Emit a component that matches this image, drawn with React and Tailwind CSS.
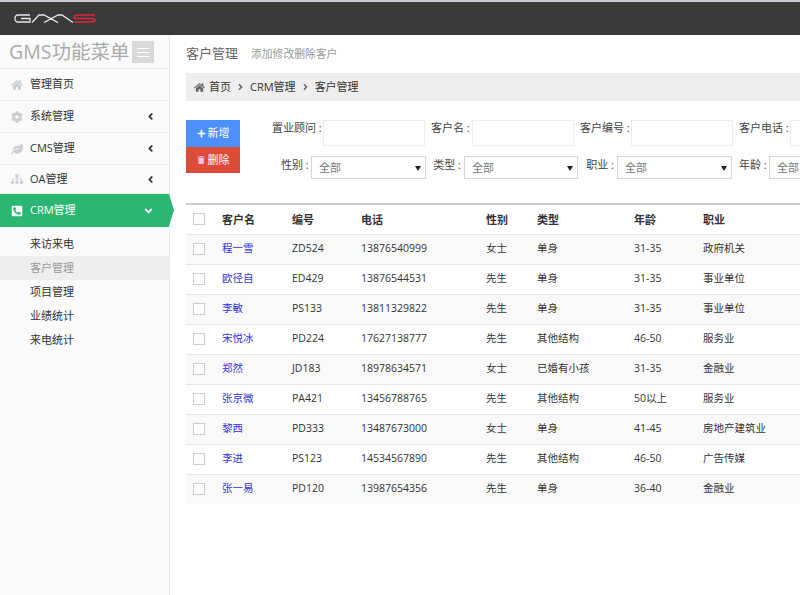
import React from "react";
import { FaHome, FaCog, FaLeaf, FaSitemap, FaPhoneSquareAlt, FaPlus, FaTrash, FaAngleLeft, FaAngleDown } from "react-icons/fa";

const menu = [
  { icon: FaCog, label: "系统管理", h: "h-[32px]" },
  { icon: FaLeaf, label: "CMS管理", h: "h-[32px]" },
  { icon: FaSitemap, label: "OA管理", h: "h-[29px]" },
];

const subMenu = ["来访来电", "客户管理", "项目管理", "业绩统计", "来电统计"];

const customers = [
  ["程一雪", "ZD524", "13876540999", "女士", "单身", "31-35", "政府机关"],
  ["欧径自", "ED429", "13876544531", "先生", "单身", "31-35", "事业单位"],
  ["李敏", "PS133", "13811329822", "先生", "单身", "31-35", "事业单位"],
  ["宋悦冰", "PD224", "17627138777", "先生", "其他结构", "46-50", "服务业"],
  ["郑然", "JD183", "18978634571", "女士", "已婚有小孩", "31-35", "金融业"],
  ["张京微", "PA421", "13456788765", "先生", "其他结构", "50以上", "服务业"],
  ["黎西", "PD333", "13487673000", "女士", "单身", "41-45", "房地产建筑业"],
  ["李进", "PS123", "14534567890", "先生", "其他结构", "46-50", "广告传媒"],
  ["张一易", "PD120", "13987654356", "先生", "单身", "36-40", "金融业"],
];

const Field = ({ label, labelClass, inputClass }) => (
  <div className="flex shrink-0 items-start">
    <span className={`whitespace-nowrap pr-[3px] text-right text-[11px] leading-[16px] text-[#444] ${labelClass}`}>{label} :</span>
    <input className={`h-[26px] border border-[#eee] bg-white ${inputClass}`} />
  </div>
);

const Pick = ({ label, labelClass, selectClass }) => (
  <div className="flex shrink-0 items-start">
    <span className={`whitespace-nowrap pr-[3px] pt-[1px] text-right text-[11px] leading-[16px] text-[#444] ${labelClass}`}>{label} :</span>
    <div className={`relative flex h-[23px] items-center border border-[#d5d5d5] bg-white pl-[7px] pt-[1px] text-[11px] text-[#777] ${selectClass}`}>
      全部
      <span className="absolute right-[4px] top-[9px] h-0 w-0 border-x-[3px] border-t-[5px] border-x-transparent border-t-[#222]" />
    </div>
  </div>
);

export default function App() {
  return (
    <div className="flex h-[595px] w-[800px] flex-col overflow-hidden bg-white font-['Open_Sans','Noto_Sans_CJK_SC',sans-serif] text-[11px] text-[#333]">
      {/* Header */}
      <div className="flex h-[35px] shrink-0 items-center border-t-2 border-[#c8c8d0] bg-[#3a3a3a] pl-[14px]">
        <svg width="82" height="9" viewBox="0 0 82 9" fill="none" strokeWidth="1.3">
          <path d="M16 1H4Q1 1 1 4.500Q1 8 4 8H16V4.500H7" stroke="#e8e8e8" />
          <path d="M18 8.500L25 1H30L44 8.500M30 8.500L44 1H48L59 8.500" stroke="#e8e8e8" />
          <path d="M81 1H64Q60 1 60 3Q60 4.500 64 4.500H77Q81 4.500 81 6.500Q81 8 77 8H60" stroke="#e0243a" strokeWidth="1.6" />
        </svg>
      </div>

      <div className="flex min-h-0 flex-1">
        {/* Sidebar */}
        <div className="relative w-[170px] shrink-0 border-r border-[#e8e8e8] bg-[#fafafa]">
          <div className="flex h-[34px] items-center border-b border-[#e5e5e5] pl-[9px]">
            <span className="text-[19.5px] leading-[34px] text-[#aaa]">GMS功能菜单</span>
            <span className="ml-[3px] mt-[1px] flex h-[22px] w-[22px] flex-col items-center justify-center gap-[3px] bg-[#d9d9d9]">
              <i className="h-px w-[12px] bg-white" />
              <i className="h-px w-[12px] bg-white" />
              <i className="h-px w-[12px] bg-white" />
            </span>
          </div>
          <div className="flex h-[32px] items-center border-b border-[#eee] pl-[11px]">
            <FaHome className="h-[12px] w-[12px] text-[#ccc]" />
            <span className="ml-[7px]">管理首页</span>
          </div>
          {menu.map((m) => (
            <div key={m.label} className={`flex items-center border-b border-[#eee] pl-[11px] pr-[14px] ${m.h}`}>
              <m.icon className="h-[12px] w-[12px] text-[#ccc]" />
              <span className="ml-[7px] flex-1">{m.label}</span>
              <FaAngleLeft className="h-[11px] w-[9px] text-[#333]" />
            </div>
          ))}
          <div className="relative flex h-[33px] items-center bg-[#2bb673] pl-[11px] pr-[15px] text-white">
            <FaPhoneSquareAlt className="h-[12px] w-[12px]" />
            <span className="ml-[7px] flex-1">CRM管理</span>
            <FaAngleDown className="h-[12px] w-[11px]" />
            <span className="absolute left-full top-0 h-0 w-0 border-y-[16.5px] border-l-[5px] border-y-transparent border-l-[#2bb673]" />
          </div>
          <div className="mt-[5px]">
            {subMenu.map((s) => (
              <div key={s} className={`flex h-[24px] items-center pl-[30px] text-[11px] ${s === "客户管理" ? "bg-[#eeeeee] text-[#999]" : ""}`}>
                {s}
              </div>
            ))}
          </div>
        </div>

        {/* Main */}
        <div className="min-w-0 flex-1 overflow-hidden pl-[16px]">
          <div className="flex h-[38px] items-center">
            <span className="text-[13px] text-[#666]">客户管理</span>
            <span className="ml-[13px] text-[10.8px] text-[#999]">添加修改删除客户</span>
          </div>
          <div className="flex h-[28px] items-center bg-[#eeeeee] pl-[8px]">
            <FaHome className="h-[11px] w-[11px] text-[#666]" />
            <span className="ml-[4px]">首页</span>
            <FaAngleLeft className="mx-[6px] h-[10px] w-[7px] rotate-180 text-[#666]" />
            <span>CRM管理</span>
            <FaAngleLeft className="mx-[6px] h-[10px] w-[7px] rotate-180 text-[#666]" />
            <span>客户管理</span>
          </div>

          <div className="mt-[19px] flex h-[84px]">
            <div className="w-[54px] shrink-0">
              <div className="flex h-[27px] items-center justify-center gap-[2px] bg-[#4a8ffc] text-white">
                <FaPlus className="h-[9px] w-[9px]" />新增
              </div>
              <div className="flex h-[26px] items-center justify-center gap-[3px] bg-[#dd4b39] text-white">
                <FaTrash className="h-[8px] w-[8px] text-[#fbd]" />删除
              </div>
            </div>
            <div className="ml-[32px] flex flex-col gap-[10px]">
              <div className="flex gap-[6px]">
                <Field label="置业顾问" labelClass="w-[51px]" inputClass="w-[102px]" />
                <Field label="客户名" labelClass="w-[41px]" inputClass="w-[102px]" />
                <Field label="客户编号" labelClass="w-[51px]" inputClass="w-[102px]" />
                <Field label="客户电话" labelClass="w-[51px]" inputClass="w-[102px]" />
              </div>
              <div className="flex gap-[7px]">
                <div className="ml-[9px]">
                  <Pick label="性别" labelClass="w-[30px]" selectClass="w-[115px]" />
                </div>
                <Pick label="类型" labelClass="w-[31px]" selectClass="w-[114px]" />
                <Pick label="职业" labelClass="w-[32px]" selectClass="w-[115px]" />
                <Pick label="年龄" labelClass="w-[30px]" selectClass="w-[115px]" />
              </div>
            </div>
          </div>

          <table className="mt-[-1px] w-[640px] table-fixed border-t-[2px] border-[#ccc] text-left">
            <colgroup>
              <col className="w-[29px]" />
              <col className="w-[70px]" />
              <col className="w-[69px]" />
              <col className="w-[125px]" />
              <col className="w-[51px]" />
              <col className="w-[97px]" />
              <col className="w-[69px]" />
              <col className="w-[130px]" />
            </colgroup>
            <thead>
              <tr className="h-[30px]">
                <th className="pl-[7px]"><span className="block h-[12px] w-[12px] border border-[#ccc]" /></th>
                {["客户名", "编号", "电话", "性别", "类型", "年龄", "职业"].map((h) => (
                  <th key={h} className="pl-[7px] pt-[2px] text-[11px] font-bold text-[#333]">{h}</th>
                ))}
              </tr>
            </thead>
            <tbody>
              {customers.map((c, i) => (
                <tr key={c[1]} className={`h-[30px] border-t border-[#e5e5e5] text-[10.5px] ${i % 2 === 0 ? "bg-[#f9f9f9]" : ""}`}>
                  <td className="pl-[7px]"><span className="block h-[12px] w-[12px] border border-[#ccc] bg-white" /></td>
                  <td className="pl-[7px] text-[#3333dd]">{c[0]}</td>
                  {c.slice(1).map((v, j) => (
                    <td key={j} className="whitespace-nowrap pl-[7px]">{v}</td>
                  ))}
                </tr>
              ))}
            </tbody>
          </table>
        </div>
      </div>
    </div>
  );
}
